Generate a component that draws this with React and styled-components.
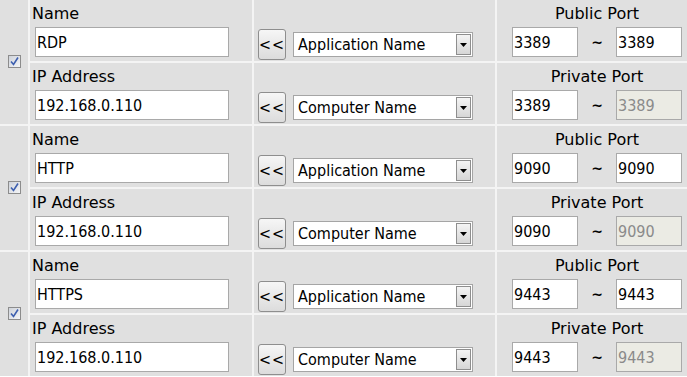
import React from 'react'
import styled, { createGlobalStyle } from 'styled-components'

const GlobalStyle = createGlobalStyle`
  html, body {
    margin: 0;
    padding: 0;
    background: #ffffff;
    overflow: hidden;
  }
`

const rules = [
  { name: 'RDP', ip: '192.168.0.110', pub: '3389', priv: '3389' },
  { name: 'HTTP', ip: '192.168.0.110', pub: '9090', priv: '9090' },
  { name: 'HTTPS', ip: '192.168.0.110', pub: '9443', priv: '9443' },
]

const Table = styled.div`
  display: grid;
  grid-template-columns: 28px 222px 241px 200px;
  grid-auto-rows: 61px;
  gap: 2px;
  background: #f4f4f4;
  width: 697px;
  font-family: "DejaVu Sans", Verdana, sans-serif;
`

const Cell = styled.div`
  background: #e0e0e0;
  box-sizing: border-box;
  min-width: 0;
`

const CheckCell = styled(Cell)`
  grid-row: span 2;
  display: flex;
  align-items: center;
  justify-content: center;
  padding-bottom: 1px;
`

const FieldCell = styled(Cell)`
  display: flex;
  flex-direction: column;
  padding: 4px 0 0 2px;
`

const PickCell = styled(Cell)`
  display: flex;
  align-items: center;
  padding: 28px 0 0 4px;
`

const PortCell = styled(Cell)`
  display: flex;
  flex-direction: column;
  align-items: center;
  padding-top: 4px;
`

const Label = styled.div`
  font-size: 16px;
  line-height: 20px;
  color: #000;
  height: 20px;
  margin-bottom: 3px;
`

const Box = styled.input`
  box-sizing: border-box;
  height: 30px;
  width: ${p => p.$w}px;
  margin: 0 0 0 ${p => p.$ml || 0}px;
  padding: 0 ${p => p.$pad}px;
  border: 1px solid #a9a9a9;
  background: ${p => (p.disabled ? '#ebebe4' : '#ffffff')};
  color: ${p => (p.disabled ? '#8a8a8a' : '#000')};
  font-family: "DejaVu Sans Condensed", "DejaVu Sans", sans-serif;
  font-stretch: condensed;
  font-size: 16px;
  outline: none;
  -webkit-text-fill-color: ${p => (p.disabled ? '#8a8a8a' : '#000')};
  opacity: 1;
`

const CheckBox = styled.span`
  box-sizing: border-box;
  width: 13px;
  height: 13px;
  border: 1px solid #8c8c8c;
  background: linear-gradient(135deg, #cfd3da, #f4f5f7);
  display: flex;
  align-items: center;
  justify-content: center;
`

const ArrowBtn = styled.button`
  box-sizing: border-box;
  width: 28px;
  height: 31px;
  padding: 0;
  border: 1px solid #8e8e8e;
  border-radius: 3px;
  background: linear-gradient(#f6f6f6, #dcdcdc);
  font-family: "DejaVu Sans Condensed", "DejaVu Sans", sans-serif;
  font-stretch: condensed;
  font-size: 16px;
  color: #000;
  letter-spacing: 1px;
  margin-right: 7px;
`

const SelectWrap = styled.div`
  position: relative;
  box-sizing: border-box;
  width: 180px;
  height: 25px;
  border: 1px solid #a5a5a5;
  background: #fff;
  display: flex;
  align-items: center;
`

const SelectText = styled.span`
  font-family: "DejaVu Sans Condensed", "DejaVu Sans", sans-serif;
  font-stretch: condensed;
  font-size: 16px;
  color: #000;
  padding-left: 4px;
  white-space: nowrap;
`

const DropBox = styled.span`
  position: absolute;
  right: 1px;
  top: 1px;
  bottom: 1px;
  width: 15px;
  box-sizing: border-box;
  border: 1px solid #8e8e8e;
  background: linear-gradient(#f4f4f4, #d6d6d6);
  display: flex;
  align-items: center;
  justify-content: center;
`

const PortRow = styled.div`
  display: flex;
  align-items: center;
  width: 170px;
  justify-content: space-between;
`

const Tilde = styled.span`
  font-size: 14px;
  font-weight: bold;
  color: #000;
  width: 37px;
  text-align: center;
  font-family: "DejaVu Sans", sans-serif;
`

function Check() {
  return (
    <CheckBox>
      <svg width="9" height="9" viewBox="0 0 9 9">
        <path d="M1 4.5 L3.5 7.5 L8 0.5" fill="none" stroke="#3d5faf" strokeWidth="1.6" />
      </svg>
    </CheckBox>
  )
}

function FakeSelect({ value }) {
  return (
    <SelectWrap>
      <SelectText>{value}</SelectText>
      <DropBox>
        <svg width="7" height="4" viewBox="0 0 7 4">
          <path d="M0 0 H7 L3.5 4 Z" fill="#000" />
        </svg>
      </DropBox>
    </SelectWrap>
  )
}

function Rule({ rule }) {
  return (
    <>
      <CheckCell>
        <Check />
      </CheckCell>
      <FieldCell>
        <Label>Name</Label>
        <Box $w={194} $ml={3} $pad={1} defaultValue={rule.name} />
      </FieldCell>
      <PickCell>
        <ArrowBtn>&lt;&lt;</ArrowBtn>
        <FakeSelect value="Application Name" />
      </PickCell>
      <PortCell>
        <Label>Public Port</Label>
        <PortRow>
          <Box $w={66} $pad={1} defaultValue={rule.pub} />
          <Tilde>~</Tilde>
          <Box $w={66} $pad={1} defaultValue={rule.pub} />
        </PortRow>
      </PortCell>
      <FieldCell>
        <Label>IP Address</Label>
        <Box $w={194} $ml={3} $pad={1} defaultValue={rule.ip} />
      </FieldCell>
      <PickCell>
        <ArrowBtn>&lt;&lt;</ArrowBtn>
        <FakeSelect value="Computer Name" />
      </PickCell>
      <PortCell>
        <Label>Private Port</Label>
        <PortRow>
          <Box $w={66} $pad={1} defaultValue={rule.priv} />
          <Tilde>~</Tilde>
          <Box $w={66} $pad={1} defaultValue={rule.priv} disabled />
        </PortRow>
      </PortCell>
    </>
  )
}

export default function App() {
  return (
    <>
      <GlobalStyle />
      <Table>
        {rules.map(r => (
          <Rule key={r.name} rule={r} />
        ))}
      </Table>
    </>
  )
}
